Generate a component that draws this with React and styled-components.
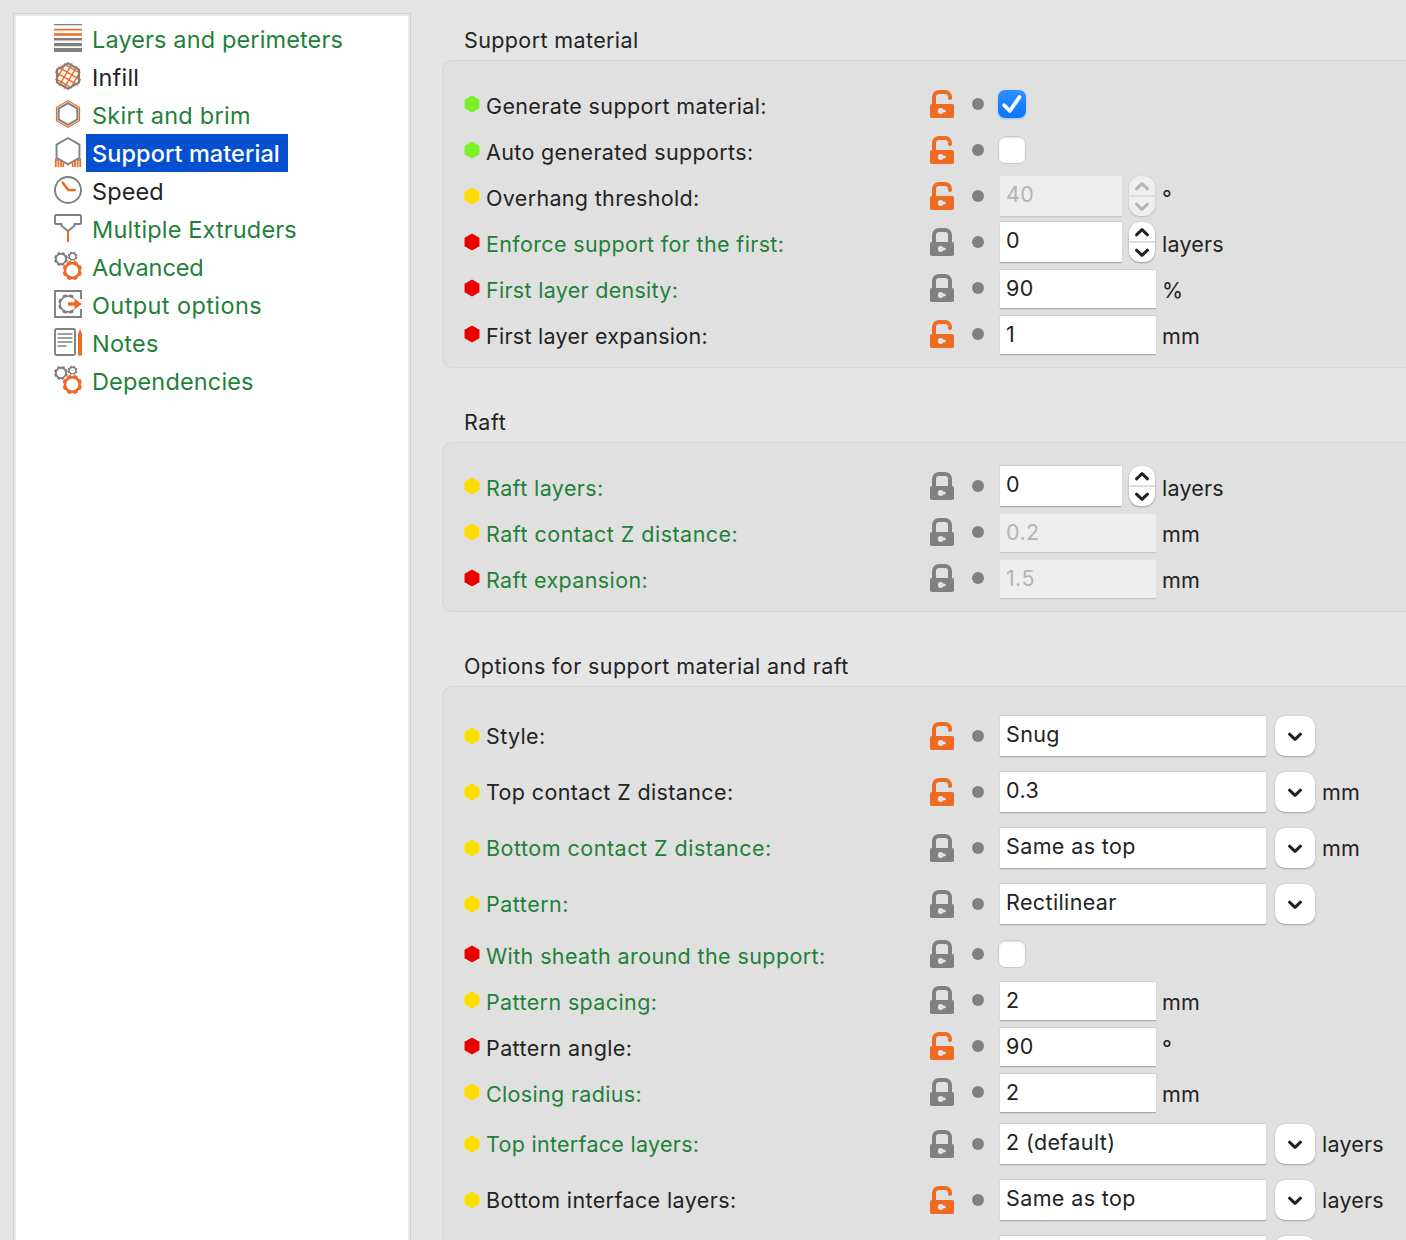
import React from 'react';
import styled, { createGlobalStyle } from 'styled-components';

const GREEN = '#1f8139';
const INK = '#232323';
const ORANGE = '#ee6c22';
const GREY = '#808080';
const LEVELS = { simple: '#7cf12b', advanced: '#ffdc00', expert: '#e90000' };

const GlobalStyle = createGlobalStyle`
  * { box-sizing: border-box; }
  body {
    margin: 0;
    background: #e5e5e5;
    font-family: Inter, "Liberation Sans", sans-serif;
    color: ${INK};
    overflow: hidden;
  }
`;

const Window = styled.div`
  display: flex;
  height: 1240px;
  overflow: hidden;
  background: #e5e5e5;
`;

const Sidebar = styled.nav`
  flex: none;
  width: 398px;
  margin: 13px 31px 0 13px;
  padding: 6px 0 0 39px;
  background: #fff;
  border: 1px solid #d2d2d2;
  border-bottom: 0;
  box-shadow: inset 2px 2px 0 #e9e9e9, inset -2px 0 0 #e9e9e9;
`;

const PageItem = styled.div`
  display: flex;
  align-items: center;
  height: 38px;
  padding-left: 1px;
`;

const PageIcon = styled.svg`
  flex: none;
  display: block;
  width: 28px;
  height: 28px;
  margin-bottom: 2px;
  overflow: visible;
`;

const PageName = styled.span`
  height: 38px;
  margin-left: 4px;
  padding: 0 0 0 6px;
  line-height: 40px;
  font-size: 23.5px;
  white-space: nowrap;
  letter-spacing: ${(p) => p.$track}px;
  color: ${(p) => (p.$selected ? '#fff' : p.$system ? GREEN : INK)};
  background: ${(p) => (p.$selected ? '#0550d0' : 'transparent')};
  ${(p) => p.$selected && 'width: 202px; font-weight: 500;'}
`;

const Settings = styled.main`
  flex: 1;
  min-width: 0;
  padding-top: 20px;
`;

const GroupTitle = styled.h2`
  margin: 0 0 0 22px;
  height: 40px;
  line-height: 41px;
  font-size: 21.5px;
  font-weight: 400;
  letter-spacing: ${(p) => p.$track}px;
`;

const GroupBox = styled.section`
  margin-bottom: 34px;
  padding: ${(p) => p.$top}px 0 10px 21px;
  background: #e0e0e0;
  border: 1px solid #d6d6d6;
  border-right: 0;
  border-radius: 10px 0 0 10px;
`;

const OptionRow = styled.div`
  display: grid;
  grid-template-columns: 22px 444px 42px 28px auto;
  align-items: center;
  height: ${(p) => p.$height}px;
`;

const Hexagon = styled.svg`
  display: block;
  width: 16px;
  height: 16px;
  overflow: visible;
`;

const OptionLabel = styled.span`
  padding-top: ${(p) => (p.$combo ? 0 : 4)}px;
  line-height: 30px;
  font-size: 21.5px;
  white-space: nowrap;
  letter-spacing: ${(p) => p.$track}px;
  color: ${(p) => (p.$system ? GREEN : INK)};
`;

const LockIcon = styled.svg`
  display: block;
  width: 24px;
  height: 28px;
`;

const Dot = styled.span`
  width: 12px;
  height: 12px;
  border-radius: 50%;
  background: ${GREY};
`;

const Editor = styled.div`
  display: flex;
  align-items: center;
`;

const Field = styled.div`
  flex: none;
  width: ${(p) => p.$width}px;
  height: ${(p) => p.$height}px;
  margin-top: ${(p) => p.$drop || 0}px;
  padding-left: 6px;
  line-height: ${(p) => p.$line}px;
  font-size: 21.5px;
  letter-spacing: ${(p) => p.$track}px;
  white-space: nowrap;
  color: ${(p) => (p.$disabled ? '#b4b4b4' : INK)};
  background: ${(p) => (p.$disabled ? '#eeeeee' : '#fff')};
  box-shadow: ${(p) =>
    p.$disabled
      ? '0 1px 0 #c6c6c6, 0 2px 0 #dadada'
      : '0 1px 0 #a8a8a8, 0 2px 0 #d2d2d2, 0 -1px 0 #cfcfcf, 1px 0 0 #d6d6d6, -1px 0 0 #d6d6d6'};
`;

const Unit = styled.span`
  margin-left: ${(p) => p.$gap}px;
  padding-top: ${(p) => (p.$combo ? 0 : 4)}px;
  line-height: 30px;
  font-size: 21.5px;
  letter-spacing: ${(p) => p.$track}px;
`;

const Stepper = styled.div`
  flex: none;
  display: flex;
  flex-direction: column;
  width: 26px;
  height: 40px;
  margin-left: 7px;
  border-radius: 11px;
  color: ${(p) => (p.$disabled ? '#b5b5b5' : INK)};
  background: ${(p) => (p.$disabled ? '#efefef' : '#fff')};
  box-shadow: 0 1px 2px rgba(0, 0, 0, ${(p) => (p.$disabled ? 0.16 : 0.3)}),
    0 0 1px rgba(0, 0, 0, 0.15);
`;

const StepHalf = styled.div`
  display: flex;
  flex: 1;
  align-items: center;
  justify-content: center;
  & + & {
    border-top: 2px solid #dcdcdc;
  }
`;

const Chevron = styled.svg`
  display: block;
  width: 16px;
  height: 10px;
  fill: none;
  stroke: currentColor;
  stroke-width: 3;
  stroke-linecap: round;
  stroke-linejoin: round;
`;

const ComboButton = styled.div`
  flex: none;
  display: flex;
  align-items: center;
  justify-content: center;
  width: 40px;
  height: 40px;
  margin-left: 9px;
  padding-top: 1px;
  border-radius: 10px;
  background: #fff;
  box-shadow: 0 1px 2px rgba(0, 0, 0, 0.28), 0 0 1px rgba(0, 0, 0, 0.15);
`;

const CheckBox = styled.div`
  display: flex;
  align-items: center;
  justify-content: center;
  width: 28px;
  height: 28px;
  margin-left: -2px;
  border-radius: 7px;
  border: ${(p) => (p.$checked ? 0 : '1px solid #cbcbcb')};
  background: ${(p) => (p.$checked ? 'linear-gradient(#3090ff, #0a76fb)' : '#fff')};
  box-shadow: ${(p) =>
    p.$checked ? '0 1px 2px rgba(10, 118, 251, 0.3)' : 'inset 0 1px 2px rgba(0, 0, 0, 0.12)'};
`;

const hexPath = (cx, cy, r) => {
  const w = r * 0.866;
  return `M${cx} ${cy - r}L${cx + w} ${cy - r / 2}V${cy + r / 2}L${cx} ${cy + r}L${cx - w} ${cy + r / 2}V${cy - r / 2}Z`;
};

const gearPath = (cx, cy, r, depth, teeth) => {
  const pts = [];
  const step = (Math.PI * 2) / teeth;
  for (let i = 0; i < teeth; i += 1) {
    const a = (i + 0.5) * step - Math.PI / 2;
    [
      [-0.22, r],
      [0.22, r],
      [0.36, r - depth],
      [0.64, r - depth],
    ].forEach(([t, rad]) => {
      pts.push(`${(cx + rad * Math.cos(a + t * step)).toFixed(2)} ${(cy + rad * Math.sin(a + t * step)).toFixed(2)}`);
    });
  }
  return `M${pts.join('L')}Z`;
};

const ring = (cx, cy, r) => `M${cx - r} ${cy}a${r} ${r} 0 1 0 ${2 * r} 0a${r} ${r} 0 1 0 ${-2 * r} 0Z`;

const Gears = () => (
  <g fillRule="evenodd">
    <path fill={GREY} d={gearPath(7, 7, 7.1, 1.1, 8) + ring(7, 7, 4.2)} />
    <path fill={GREY} d={gearPath(18.6, 4.5, 4.9, 0.8, 8) + ring(18.6, 4.5, 2.6)} />
    <circle cx="18.3" cy="18.5" r="10.2" fill="#fff" />
    <path fill={ORANGE} d={gearPath(18.3, 18.5, 9.9, 1.3, 8) + ring(18.3, 18.5, 6)} />
  </g>
);

const ICONS = {
  layers: (
    <g>
      <path fill={GREY} d="M0 0h28v1.2H0zM0 14h28v2.6H0zM0 19h28v3.2H0zM0 24h28v4H0z" />
      <path fill={ORANGE} d="M0 4.7h28v1.9H0zM0 9.2h28v2.6H0z" />
    </g>
  ),
  infill: (
    <g fill="none">
      <path
        stroke={ORANGE}
        strokeWidth="1.4"
        transform="rotate(30 14 14)"
        d="M4.500 5.600h18M.8 11.200h26.400M.8 16.800h26.400M4.500 22.400h18M5.600 4.500v19M11.200 1v26M16.800 1v26M22.400 4.500v19"
      />
      <path stroke={GREY} strokeWidth="2.200" d={hexPath(14, 14, 12.7)} />
    </g>
  ),
  skirt: (
    <g fill="none">
      <path stroke={ORANGE} strokeWidth="1.200" d={hexPath(14, 14, 13.3)} />
      <path stroke={GREY} strokeWidth="2.100" d={hexPath(14, 14, 10.9)} />
    </g>
  ),
  support: (
    <g fill="none">
      <path
        stroke={ORANGE}
        strokeWidth="1.700"
        d="M1.800 20.500v8.500M4.400 21.500v7.500M7 23v6M9.300 25v4M26.200 20.500v8.500M23.600 21.500v7.500M21 23v6M18.700 25v4M1 22h4M23 22h4"
      />
      <path stroke={GREY} strokeWidth="1.900" fill="#fff" d={hexPath(14, 13.2, 13.2)} />
    </g>
  ),
  speed: (
    <g fill="none">
      <circle cx="14" cy="14" r="13" stroke={GREY} strokeWidth="1.900" />
      <path stroke={ORANGE} strokeWidth="2.500" strokeLinecap="round" strokeLinejoin="round" d="M8.600 6.500L14.200 14H20.800" />
    </g>
  ),
  extruder: (
    <g fill="none">
      <path stroke={ORANGE} strokeWidth="2" d="M14 17v11" />
      <path
        stroke={GREY}
        strokeWidth="1.900"
        strokeLinejoin="round"
        d="M2 1h24a1 1 0 0 1 1 1v7a1 1 0 0 1-1 1h-5.500v1.800L14 17l-6.500-5.200V10H2a1 1 0 0 1-1-1V2a1 1 0 0 1 1-1z"
      />
    </g>
  ),
  gears: <Gears />,
  output: (
    <g fill="none">
      <path stroke={GREY} strokeWidth="1.900" d="M27 9V1H1v26h26v-8" />
      <path fill={GREY} fillRule="evenodd" d={gearPath(14, 14, 10, 1.3, 8) + ring(14, 14, 7.1)} />
      <path fill="#fff" d="M18.500 8.500h7v11h-7zM13 9.800h13v8.400H13z" />
      <path fill={ORANGE} d="M14 12.200h6.500V8.600L27.800 14l-7.300 5.400v-3.600H14z" />
    </g>
  ),
  notes: (
    <g fill="none">
      <rect x="1" y="1" width="20" height="26" rx="1.500" stroke={GREY} strokeWidth="1.900" />
      <path stroke={GREY} strokeWidth="1.700" strokeLinecap="round" d="M4.200 6h13.600M4.200 10h13.600M4.200 14h13.600M4.200 18h7.600" />
      <path fill={ORANGE} d="M26 .8l2 5V26.300a1.500 1.500 0 0 1-1.500 1.500h-1A1.500 1.500 0 0 1 24 26.300V5.800z" />
    </g>
  ),
};

const Lock = ({ open }) => (
  <LockIcon viewBox="0 0 24 28" fill="none">
    <path
      stroke={open ? ORANGE : GREY}
      strokeWidth="4"
      strokeLinecap="round"
      d={open ? 'M4 16V7a5 5 0 0 1 5-5h6a5 5 0 0 1 5 5V8' : 'M4 16V7a5 5 0 0 1 5-5h6a5 5 0 0 1 5 5V16'}
    />
    <rect y="14" width="24" height="14" rx="1.800" fill={open ? ORANGE : GREY} />
    <circle cx="10.700" cy="21" r="2.900" fill="#e2e2e2" />
    <path fill="#e2e2e2" d="M12 19.800h3.400q.9 1.200 0 2.400H12z" />
  </LockIcon>
);

const Down = () => (
  <Chevron viewBox="0 0 16 10">
    <path d="M2.500 2.200L8 7.400l5.500-5.200" />
  </Chevron>
);

const Up = () => (
  <Chevron viewBox="0 0 16 10">
    <path d="M2.500 7.800L8 2.600l5.500 5.200" />
  </Chevron>
);

const Control = ({ kind, value, disabled, track = 0.38 }) => {
  if (kind === 'check') {
    return (
      <CheckBox $checked={value}>
        {value && (
          <svg width="28" height="28" viewBox="0 0 28 28" fill="none">
            <path d="M6.200 15.200L11.800 21 21.500 7" stroke="#fff" strokeWidth="3.800" strokeLinecap="round" strokeLinejoin="round" />
          </svg>
        )}
      </CheckBox>
    );
  }
  if (kind === 'spin') {
    return (
      <>
        <Field $width={122} $height={40} $line={37} $track={track} $disabled={disabled}>
          {value}
        </Field>
        <Stepper $disabled={disabled}>
          <StepHalf><Up /></StepHalf>
          <StepHalf><Down /></StepHalf>
        </Stepper>
      </>
    );
  }
  if (kind === 'combo') {
    return (
      <>
        <Field $width={266} $height={40} $line={37} $track={track}>
          {value}
        </Field>
        <ComboButton><Down /></ComboButton>
      </>
    );
  }
  return (
    <Field $width={156} $height={38} $drop={2} $line={37} $track={track} $disabled={disabled}>
      {value}
    </Field>
  );
};

const PAGES = [
  { name: 'Layers and perimeters', icon: 'layers', system: true, track: 0.13 },
  { name: 'Infill', icon: 'infill', track: 0.2 },
  { name: 'Skirt and brim', icon: 'skirt', system: true, track: 0.26 },
  { name: 'Support material', icon: 'support', selected: true, track: 0.07 },
  { name: 'Speed', icon: 'speed', track: 0.1 },
  { name: 'Multiple Extruders', icon: 'extruder', system: true, track: 0.15 },
  { name: 'Advanced', icon: 'gears', system: true, track: -0.1 },
  { name: 'Output options', icon: 'output', system: true, track: 0.4 },
  { name: 'Notes', icon: 'notes', system: true, track: 0.25 },
  { name: 'Dependencies', icon: 'gears', system: true, track: 0.15 },
];

const GROUPS = [
  {
    title: 'Support material',
    track: 0.38,
    top: 20,
    rows: [
      { label: 'Generate support material:', level: 'simple', kind: 'check', value: true, track: 0.36 },
      { label: 'Auto generated supports:', level: 'simple', kind: 'check', value: false, track: 0.35 },
      { label: 'Overhang threshold:', level: 'advanced', kind: 'spin', value: '40', unit: '°', disabled: true, track: 0.33 },
      { label: 'Enforce support for the first:', level: 'expert', kind: 'spin', value: '0', unit: 'layers', system: true, track: 0.35 },
      { label: 'First layer density:', level: 'expert', kind: 'text', value: '90', unit: '%', system: true, track: 0.29 },
      { label: 'First layer expansion:', level: 'expert', kind: 'text', value: '1', unit: 'mm', track: 0.27 },
    ],
  },
  {
    title: 'Raft',
    track: 0.6,
    top: 20,
    rows: [
      { label: 'Raft layers:', level: 'advanced', kind: 'spin', value: '0', unit: 'layers', system: true, track: 0.4 },
      { label: 'Raft contact Z distance:', level: 'advanced', kind: 'text', value: '0.2', unit: 'mm', system: true, disabled: true, track: 0.48 },
      { label: 'Raft expansion:', level: 'expert', kind: 'text', value: '1.5', unit: 'mm', system: true, disabled: true, track: 0.38 },
    ],
  },
  {
    title: 'Options for support material and raft',
    track: 0.41,
    top: 21,
    rows: [
      { label: 'Style:', level: 'advanced', kind: 'combo', value: 'Snug', track: 0.35 },
      { label: 'Top contact Z distance:', level: 'advanced', kind: 'combo', value: '0.3', unit: 'mm', track: 0.37 },
      { label: 'Bottom contact Z distance:', level: 'advanced', kind: 'combo', value: 'Same as top', unit: 'mm', system: true, track: 0.5 },
      { label: 'Pattern:', level: 'advanced', kind: 'combo', value: 'Rectilinear', system: true, track: 0.5 },
      { label: 'With sheath around the support:', level: 'expert', kind: 'check', value: false, system: true, height: 44, track: 0.39 },
      { label: 'Pattern spacing:', level: 'advanced', kind: 'text', value: '2', unit: 'mm', system: true, height: 48, track: 0.38 },
      { label: 'Pattern angle:', level: 'expert', kind: 'text', value: '90', unit: '°', height: 44, track: 0.4 },
      { label: 'Closing radius:', level: 'advanced', kind: 'text', value: '2', unit: 'mm', system: true, height: 48, track: 0.33 },
      { label: 'Top interface layers:', level: 'advanced', kind: 'combo', value: '2 (default)', unit: 'layers', system: true, track: 0.28 },
      { label: 'Bottom interface layers:', level: 'advanced', kind: 'combo', value: 'Same as top', unit: 'layers', track: 0.39 },
      { label: '', level: 'advanced', kind: 'combo', value: '', system: true },
    ],
  },
];

const UNIT_GAP = { spin: 7, combo: 7, text: 6 };

const Option = ({ label, level, kind, value, unit, system, disabled, height, track }) => {
  const combo = kind === 'combo';
  return (
    <OptionRow $height={height || (combo ? 56 : 46)}>
      <Hexagon viewBox="0 0 16 16">
        <path d={hexPath(8, 8, 8.6)} fill={LEVELS[level]} />
      </Hexagon>
      <OptionLabel $combo={combo} $system={system} $track={track}>{label}</OptionLabel>
      <Lock open={!system} />
      <Dot />
      <Editor>
        <Control kind={kind} value={value} disabled={disabled} />
        {unit && (
          <Unit $combo={combo} $gap={UNIT_GAP[kind]} $track={unit === 'mm' ? 0.2 : 0.22}>
            {unit}
          </Unit>
        )}
      </Editor>
    </OptionRow>
  );
};

export default function App() {
  return (
    <>
      <GlobalStyle />
      <Window>
        <Sidebar>
          {PAGES.map((page) => (
            <PageItem key={page.name}>
              <PageIcon viewBox="0 0 28 28">{ICONS[page.icon]}</PageIcon>
              <PageName $system={page.system} $selected={page.selected} $track={page.track}>
                {page.name}
              </PageName>
            </PageItem>
          ))}
        </Sidebar>
        <Settings>
          {GROUPS.map((group) => (
            <React.Fragment key={group.title}>
              <GroupTitle $track={group.track}>{group.title}</GroupTitle>
              <GroupBox $top={group.top}>
                {group.rows.map((row, i) => (
                  <Option key={i} {...row} />
                ))}
              </GroupBox>
            </React.Fragment>
          ))}
        </Settings>
      </Window>
    </>
  );
}
